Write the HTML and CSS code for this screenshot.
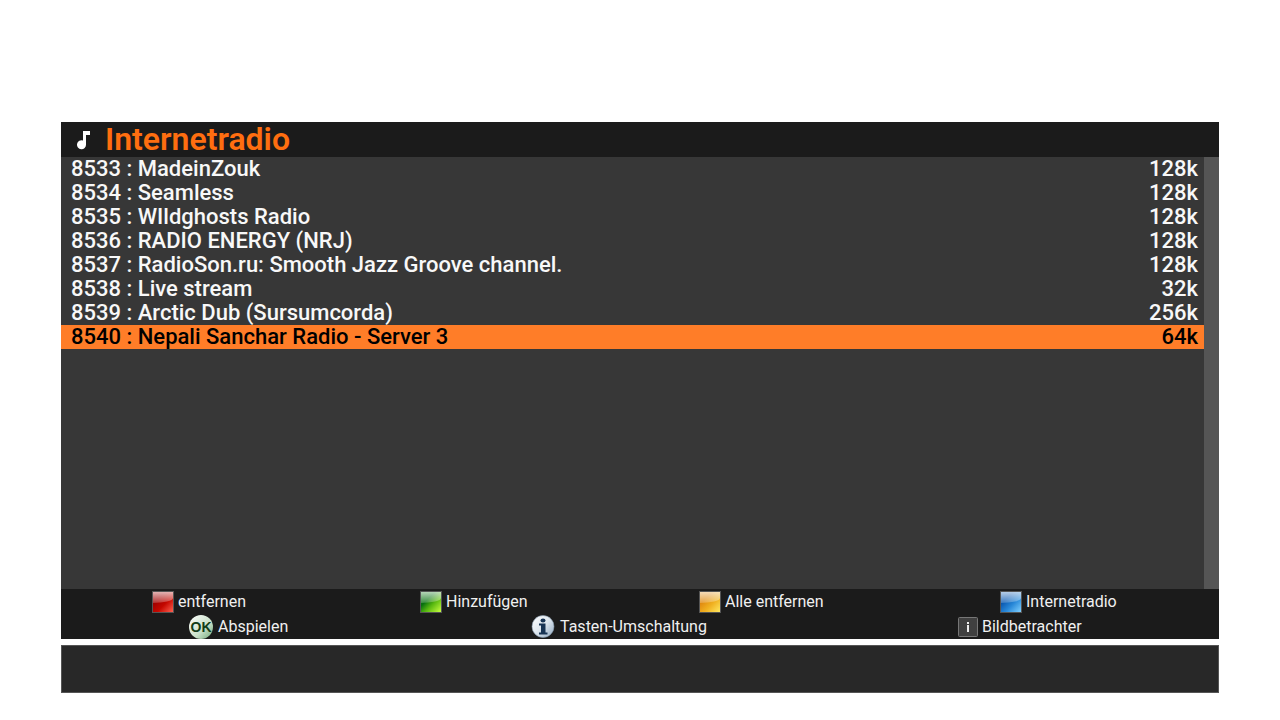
FILE: index.html
```html
<!DOCTYPE html>
<html lang="de">
<head>
    <meta charset="UTF-8">
    <title>Internetradio</title>
    <link rel="stylesheet" href="styles.css">
</head>
<body>
<main id="player">
    <header class="title">
        <svg class="note" viewBox="0 0 14 20" aria-hidden="true">
            <path d="M6 1H13V5H9V14.500A4.500 4.500 0 1 1 6 10.500Z" fill="#fff"/>
        </svg>
        <h1>Internetradio</h1>
    </header>
    <div class="content">
        <ul class="playlist">
            <li><span>8533 : MadeinZouk</span><span>128k</span></li>
            <li><span>8534 : Seamless</span><span>128k</span></li>
            <li><span>8535 : WIldghosts Radio</span><span>128k</span></li>
            <li><span>8536 : RADIO ENERGY (NRJ)</span><span>128k</span></li>
            <li><span>8537 : RadioSon.ru: Smooth Jazz Groove channel.</span><span>128k</span></li>
            <li><span>8538 : Live stream</span><span>32k</span></li>
            <li><span>8539 : Arctic Dub (Sursumcorda)</span><span>256k</span></li>
            <li class="selected"><span>8540 : Nepali Sanchar Radio - Server 3</span><span>64k</span></li>
        </ul>
        <div class="scrollbar"></div>
    </div>
    <footer>
        <div class="keys colors">
            <button type="button"><i class="key red"></i>entfernen</button>
            <button type="button"><i class="key green"></i>Hinzufügen</button>
            <button type="button"><i class="key yellow"></i>Alle entfernen</button>
            <button type="button"><i class="key blue"></i>Internetradio</button>
        </div>
        <div class="keys extra">
            <button type="button"><i class="round ok">OK</i>Abspielen</button>
            <button type="button">
                <svg class="help" viewBox="0 0 24 24" aria-hidden="true">
                    <defs>
                        <linearGradient id="silver" x1="0" y1="0" x2="1" y2="1">
                            <stop offset="0" stop-color="#fff"/>
                            <stop offset=".5" stop-color="#dde6ee"/>
                            <stop offset="1" stop-color="#8fa8c0"/>
                        </linearGradient>
                    </defs>
                    <circle cx="12" cy="11.500" r="11" fill="url(#silver)" stroke="#7f93a8" stroke-width=".6"/>
                    <ellipse cx="12" cy="5.500" rx="2.500" ry="2" fill="#183454"/>
                    <path d="M8 8.500H14.500V17.500H16.500V19.500H8V17.500H10V10.500H8Z" fill="#183454"/>
                </svg>Tasten-Umschaltung
            </button>
            <button type="button">
                <svg class="info" viewBox="0 0 20 20" aria-hidden="true">
                    <rect x=".5" y=".5" width="19" height="19" rx="1" fill="#404040" stroke="#777"/>
                    <path d="M9 5H11V7H9ZM9 8H11V15H9Z" fill="#eee"/>
                </svg>Bildbetrachter
            </button>
        </div>
    </footer>
</main>
<section id="status"></section>
</body>
</html>
```
FILE: styles.css
```css
*{
    margin: 0;
    padding: 0;
    box-sizing: border-box;
}
body{
    min-height: 100vh;
    padding: 122px 61px 27px;
    background: #fff;
    font-family: Roboto, "Liberation Sans", sans-serif;
    display: flex;
    flex-direction: column;
    gap: 6px;
}
#player{
    flex: 1;
    display: flex;
    flex-direction: column;
    background: #373737;
    color: #f8f8f8;
}
.title{
    display: flex;
    align-items: center;
    gap: 14px;
    height: 35px;
    padding-left: 16px;
    background: #1b1b1b;
}
.title .note{
    width: 14px;
    height: 20px;
}
.title h1{
    font-size: 32px;
    font-weight: 600;
    line-height: 35px;
    color: #ff6e10;
}
.content{
    flex: 1;
    display: flex;
}
.playlist{
    flex: 1;
    list-style: none;
    font-size: 22px;
    font-weight: 500;
    line-height: 24px;
}
.playlist li{
    display: flex;
    justify-content: space-between;
    padding: 0 6px 0 10px;
}
.playlist li.selected{
    background: #ff7d28;
    color: #000;
}
.scrollbar{
    width: 15px;
    background: #555;
}
footer{
    background: #1b1b1b;
}
.keys{
    display: grid;
    align-items: center;
    height: 25px;
}
.colors{
    grid-template-columns: 268fr 279fr 301fr 219fr;
    padding-left: 91px;
}
.extra{
    grid-template-columns: 342fr 427fr 261fr;
    padding-left: 128px;
}
.keys button{
    display: flex;
    align-items: center;
    gap: 4px;
    border: 0;
    background: none;
    color: #f0f0f0;
    font-family: inherit;
    font-size: 16px;
    line-height: 24px;
    cursor: pointer;
}
.key{
    width: 22px;
    height: 22px;
    border: 1px solid #555;
    position: relative;
}
/* glossy highlight on the upper half */
.key::after{
    content: "";
    position: absolute;
    left: 0;
    top: 0;
    width: 20px;
    height: 11px;
    border-bottom-right-radius: 20px 5px;
    background: linear-gradient(rgba(255,255,255,.7), rgba(255,255,255,.2));
}
.red{
    background: linear-gradient(135deg, #a00000 30%, #c40800 60%, #ff6050);
}
.green{
    background: linear-gradient(135deg, #087010 35%, #58b810 60%, #c8ff40);
}
.yellow{
    background: linear-gradient(135deg, #e08a10 30%, #f0b020 60%, #ffe860);
}
.blue{
    background: linear-gradient(135deg, #0a58b0 30%, #2888d8 60%, #80d0ff);
}
.round{
    width: 24px;
    height: 24px;
    border-radius: 50%;
}
.ok{
    background: linear-gradient(135deg, #fff, #c8e0c8 60%, #70a878);
    color: #123c18;
    font: bold 14px/24px "Liberation Sans", sans-serif;
    text-align: center;
}
.help{
    width: 24px;
    height: 24px;
}
.extra .round, .help{
    margin-right: 1px;
}
.info{
    width: 20px;
    height: 20px;
}
#status{
    height: 48px;
    border: 1px solid #555;
    background: #282828;
}
```
